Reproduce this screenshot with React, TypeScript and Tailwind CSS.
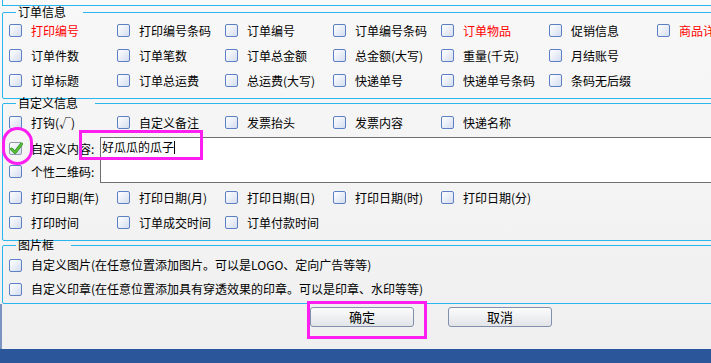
import React from 'react';

type Item = { label: string; red?: boolean };

const Box = ({ checked }: { checked?: boolean }) => (
  <span
    className={`relative block w-[13px] h-[13px] shrink-0 rounded-[2px] border bg-linear-to-br from-white to-[#d4ddef] ${
      checked ? 'border-[#8e9aae]' : 'border-[#5d7fc3]'
    }`}
  >
    {checked && (
      <svg className="absolute -left-[1px] -top-[2px]" width="15" height="15" viewBox="0 0 15 15">
        <path d="M2.5 8 L6 11.5 L12.5 3" fill="none" stroke="#2f8f1f" strokeWidth="3" strokeLinecap="round" strokeLinejoin="round" />
        <path d="M2.5 8 L6 11.5 L12.5 3" fill="none" stroke="#5cc43a" strokeWidth="1.6" strokeLinecap="round" strokeLinejoin="round" />
      </svg>
    )}
  </span>
);

const Check = ({ label, red }: Item) => (
  <div className="flex items-center gap-[9px] whitespace-nowrap">
    <Box />
    <span className={red ? 'text-[#ff0000]' : 'text-black'}>{label}</span>
  </div>
);

const Row = ({ items }: { items: Item[] }) => (
  <div className="grid grid-cols-[repeat(7,108px)] h-[25px] items-center">
    {items.map((it) => (
      <Check key={it.label} {...it} />
    ))}
  </div>
);

const Legend = ({ text }: { text: string }) => (
  <legend className="ml-[7px] pl-[2px] pr-[17px] leading-[10px] text-black">{text}</legend>
);

const orderRows: Item[][] = [
  [
    { label: '打印编号', red: true },
    { label: '打印编号条码' },
    { label: '订单编号' },
    { label: '订单编号条码' },
    { label: '订单物品', red: true },
    { label: '促销信息' },
    { label: '商品详情', red: true },
  ],
  [
    { label: '订单件数' },
    { label: '订单笔数' },
    { label: '订单总金额' },
    { label: '总金额(大写)' },
    { label: '重量(千克)' },
    { label: '月结账号' },
  ],
  [
    { label: '订单标题' },
    { label: '订单总运费' },
    { label: '总运费(大写)' },
    { label: '快递单号' },
    { label: '快递单号条码' },
    { label: '条码无后缀' },
  ],
];

const customTop: Item[] = [
  { label: '打钩(√)' },
  { label: '自定义备注' },
  { label: '发票抬头' },
  { label: '发票内容' },
  { label: '快递名称' },
];

const dateRows: Item[][] = [
  [
    { label: '打印日期(年)' },
    { label: '打印日期(月)' },
    { label: '打印日期(日)' },
    { label: '打印日期(时)' },
    { label: '打印日期(分)' },
  ],
  [{ label: '打印时间' }, { label: '订单成交时间' }, { label: '订单付款时间' }],
];

export default function App() {
  return (
    <div className="relative w-[711px] h-[363px] overflow-hidden flex flex-col bg-linear-to-b from-[#f8f8f8] to-[#efefef] text-[12px] font-['Noto_Sans_CJK_SC',sans-serif]">
      {/* bottom of previous group */}
      <div className="h-[6px] w-[760px] ml-[2px] border-l border-b border-[#2bb5ee] bg-[#fafafa] shrink-0" />

      {/* 订单信息 */}
      <fieldset className="mt-[1px] ml-[2px] w-[760px] border border-[#2bb5ee] rounded-[2px] pl-[6px] pt-[1px] pb-[5px] shrink-0">
        <Legend text="订单信息" />
        {orderRows.map((r, i) => (
          <Row key={i} items={r} />
        ))}
      </fieldset>

      {/* 自定义信息 */}
      <fieldset className="-mt-[1px] ml-[2px] w-[760px] border border-[#2bb5ee] rounded-[2px] pl-[6px] pt-[2px] pb-[5px] shrink-0">
        <Legend text="自定义信息" />
        <Row items={customTop} />
        <div className="flex h-[46px] mt-[2px]">
          <div className="w-[91px] flex flex-col">
            <div className="h-[23px] flex items-center gap-[9px] whitespace-nowrap">
              <Box checked />
              <span>自定义内容:</span>
            </div>
            <div className="h-[23px] flex items-center gap-[9px] whitespace-nowrap">
              <Box />
              <span>个性二维码:</span>
            </div>
          </div>
          <div className="flex-1 border border-[#707070] bg-white pl-[1px] leading-[18px] flex items-start">
            <span>好瓜瓜的瓜子</span>
            <span className="block w-[1px] h-[13px] mt-[3px] bg-black" />
          </div>
        </div>
        <div className="mt-[2px]">
          {dateRows.map((r, i) => (
            <Row key={i} items={r} />
          ))}
        </div>
      </fieldset>

      {/* 图片框 */}
      <fieldset className="-mt-[1px] ml-[2px] w-[760px] border border-[#2bb5ee] rounded-[2px] pl-[6px] pt-[3px] pb-[2px] shrink-0">
        <Legend text="图片框" />
        <div className="h-[24px] flex items-center">
          <Check label="自定义图片(在任意位置添加图片。可以是LOGO、定向广告等等)" />
        </div>
        <div className="h-[24px] flex items-center">
          <Check label="自定义印章(在任意位置添加具有穿透效果的印章。可以是印章、水印等等)" />
        </div>
      </fieldset>

      {/* buttons */}
      <div className="flex-1 border-l-2 border-[#7b93c0] flex items-start pt-[3px] pl-[308px] gap-[34px]">
        <button className="w-[104px] h-[20px] border border-[#8090ac] rounded-[3px] bg-linear-to-b from-[#fcfcfc] to-[#e2e4e8] text-[13px] leading-[18px] text-black">
          确定
        </button>
        <button className="w-[104px] h-[20px] border border-[#8090ac] rounded-[3px] bg-linear-to-b from-[#fcfcfc] to-[#e2e4e8] text-[13px] leading-[18px] text-black">
          取消
        </button>
      </div>

      {/* status bar */}
      <div className="h-[14px] bg-[#2b579a] shrink-0" />

      {/* annotations */}
      <div className="absolute left-[2px] top-[127px] w-[31px] h-[38px] rounded-full border-[3px] border-[#ff1ef0]" />
      <div className="absolute left-[79px] top-[130px] w-[124px] h-[30px] border-[3px] border-[#ff1ef0]" />
      <div className="absolute left-[307px] top-[301px] w-[120px] h-[38px] border-[3px] border-[#ff1ef0]" />
    </div>
  );
}
